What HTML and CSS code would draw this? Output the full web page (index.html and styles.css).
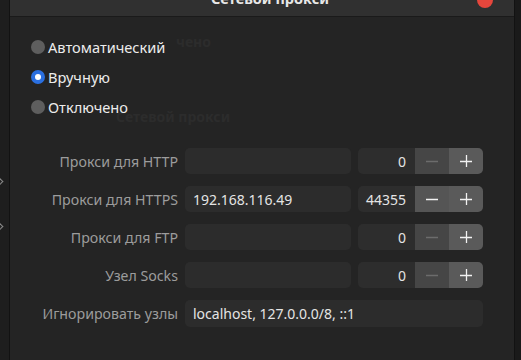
FILE: index.html
```html
<!DOCTYPE html>
<html lang="ru">
<head>
    <meta charset="UTF-8">
    <title>Сетевой прокси</title>
    <link rel="stylesheet" href="styles.css">
</head>
<body>
    <div class="side side-left">
        <span class="chevron chevron-1"></span>
        <span class="chevron chevron-2"></span>
    </div>

    <div class="dialog">
        <div class="titlebar">
            <span class="title">Сетевой прокси</span>
            <span class="close-btn"></span>
        </div>

        <div class="content">
            <!-- faint text from the window behind -->
            <span class="ghost ghost-1">чено</span>
            <span class="ghost ghost-2">Сетевой прокси</span>

            <div class="modes">
                <label class="radio"><span class="dot"></span>Автоматический</label>
                <label class="radio"><span class="dot checked"></span>Вручную</label>
                <label class="radio"><span class="dot"></span>Отключено</label>
            </div>

            <div class="form">
                <div class="label">Прокси для HTTP</div>
                <div class="entry"></div>
                <div class="spin">
                    <div class="spin-value">0</div>
                    <div class="spin-btn minus disabled"><svg width="14" height="14" viewBox="0 0 14 14"><path d="M1 7.5H13"/></svg></div>
                    <div class="spin-btn plus"><svg width="14" height="14" viewBox="0 0 14 14"><path d="M1 7.5H13M7.5 1V13"/></svg></div>
                </div>

                <div class="label">Прокси для HTTPS</div>
                <div class="entry">192.168.116.49</div>
                <div class="spin">
                    <div class="spin-value">44355</div>
                    <div class="spin-btn minus"><svg width="14" height="14" viewBox="0 0 14 14"><path d="M1 7.5H13"/></svg></div>
                    <div class="spin-btn plus"><svg width="14" height="14" viewBox="0 0 14 14"><path d="M1 7.5H13M7.5 1V13"/></svg></div>
                </div>

                <div class="label">Прокси для FTP</div>
                <div class="entry"></div>
                <div class="spin">
                    <div class="spin-value">0</div>
                    <div class="spin-btn minus disabled"><svg width="14" height="14" viewBox="0 0 14 14"><path d="M1 7.5H13"/></svg></div>
                    <div class="spin-btn plus"><svg width="14" height="14" viewBox="0 0 14 14"><path d="M1 7.5H13M7.5 1V13"/></svg></div>
                </div>

                <div class="label">Узел Socks</div>
                <div class="entry"></div>
                <div class="spin">
                    <div class="spin-value">0</div>
                    <div class="spin-btn minus disabled"><svg width="14" height="14" viewBox="0 0 14 14"><path d="M1 7.5H13"/></svg></div>
                    <div class="spin-btn plus"><svg width="14" height="14" viewBox="0 0 14 14"><path d="M1 7.5H13M7.5 1V13"/></svg></div>
                </div>

                <div class="label">Игнорировать узлы</div>
                <div class="entry wide">localhost, 127.0.0.0/8, ::1</div>
            </div>
        </div>
    </div>

    <div class="side side-right"></div>
</body>
</html>
```

FILE: styles.css
```css
* {
    margin: 0;
    padding: 0;
    box-sizing: border-box;
}

body {
    font-family: 'Noto Sans', 'Open Sans', sans-serif;
    background: #1d1d1d;
    width: 521px;
    height: 360px;
    overflow: hidden;
    display: flex;
}

.side {
    height: 100%;
    position: relative;
}

.side-left {
    width: 9px;
    background: #1e1e1e;
}

.side-right {
    flex: 1;
    background: #1a1a1a;
}

.chevron {
    position: absolute;
    left: -5px;
    width: 7px;
    height: 7px;
    border-top: 1.5px solid #8a8a8a;
    border-right: 1.5px solid #8a8a8a;
    transform: rotate(45deg);
}

.chevron-1 { top: 178px; }
.chevron-2 { top: 223px; }

.dialog {
    width: 506px;
    height: 100%;
    background: #242424;
    border-left: 1px solid #121212;
    border-right: 1px solid #121212;
    display: flex;
    flex-direction: column;
}

.titlebar {
    height: 17px;
    background: #303030;
    border-bottom: 1px solid #1a1a1a;
    position: relative;
    overflow: hidden;
}

.title {
    display: block;
    margin-top: -12px;
    padding-left: 16px;
    text-align: center;
    font-size: 14.5px;
    line-height: 20px;
    font-weight: bold;
    color: #e8e8e8;
}

.close-btn {
    position: absolute;
    top: -8px;
    right: 21px;
    width: 16px;
    height: 16px;
    border-radius: 50%;
    background: #e5463c;
}

.content {
    flex: 1;
    position: relative;
    padding-top: 15px;
}

.ghost {
    position: absolute;
    font-size: 14px;
    line-height: 14px;
    font-weight: bold;
    color: #2c2c2c;
}

.ghost-1 { left: 166px; top: 18px; }
.ghost-2 { left: 106px; top: 93px; }

.modes {
    display: flex;
    flex-direction: column;
    padding-left: 21px;
    position: relative;
}

.radio {
    height: 30px;
    display: flex;
    align-items: center;
    gap: 3px;
    font-size: 14.6px;
    color: #ececec;
}

.dot {
    width: 14px;
    height: 14px;
    border-radius: 50%;
    background: #5e5e5e;
}

.dot.checked {
    background: #ffffff;
    border: 4px solid #2a6fe0;
}

.form {
    margin-top: 26px;
    display: grid;
    grid-template-columns: 168px 166px 125px;
    column-gap: 7px;
    row-gap: 12px;
    position: relative;
}

.label {
    height: 26px;
    display: flex;
    align-items: center;
    justify-content: flex-end;
    font-size: 14.2px;
    color: #9c9c9c;
}

.entry {
    height: 26px;
    background: #2c2c2c;
    border-radius: 5px;
    padding-left: 8px;
    display: flex;
    align-items: center;
    font-size: 14px;
    color: #e4e4e4;
}

.entry.wide {
    grid-column: 2 / 4;
    height: 27px;
}

.spin {
    display: flex;
    height: 26px;
    border-radius: 5px;
    overflow: hidden;
}

.spin-value {
    width: 57px;
    background: #2d2d2d;
    display: flex;
    align-items: center;
    justify-content: flex-end;
    padding-right: 9px;
    font-size: 14px;
    color: #e4e4e4;
}

.spin-btn {
    width: 34px;
    display: flex;
    align-items: center;
    justify-content: center;
    background: #5a5a5a;
}

.spin-btn svg {
    fill: none;
    stroke: #f2f2f2;
    stroke-width: 1.3;
}

.spin-btn.minus {
    background: #555555;
}

.spin-btn.minus.disabled {
    background: #464646;
}

.spin-btn.minus.disabled svg {
    stroke: #6c6c6c;
}
```
